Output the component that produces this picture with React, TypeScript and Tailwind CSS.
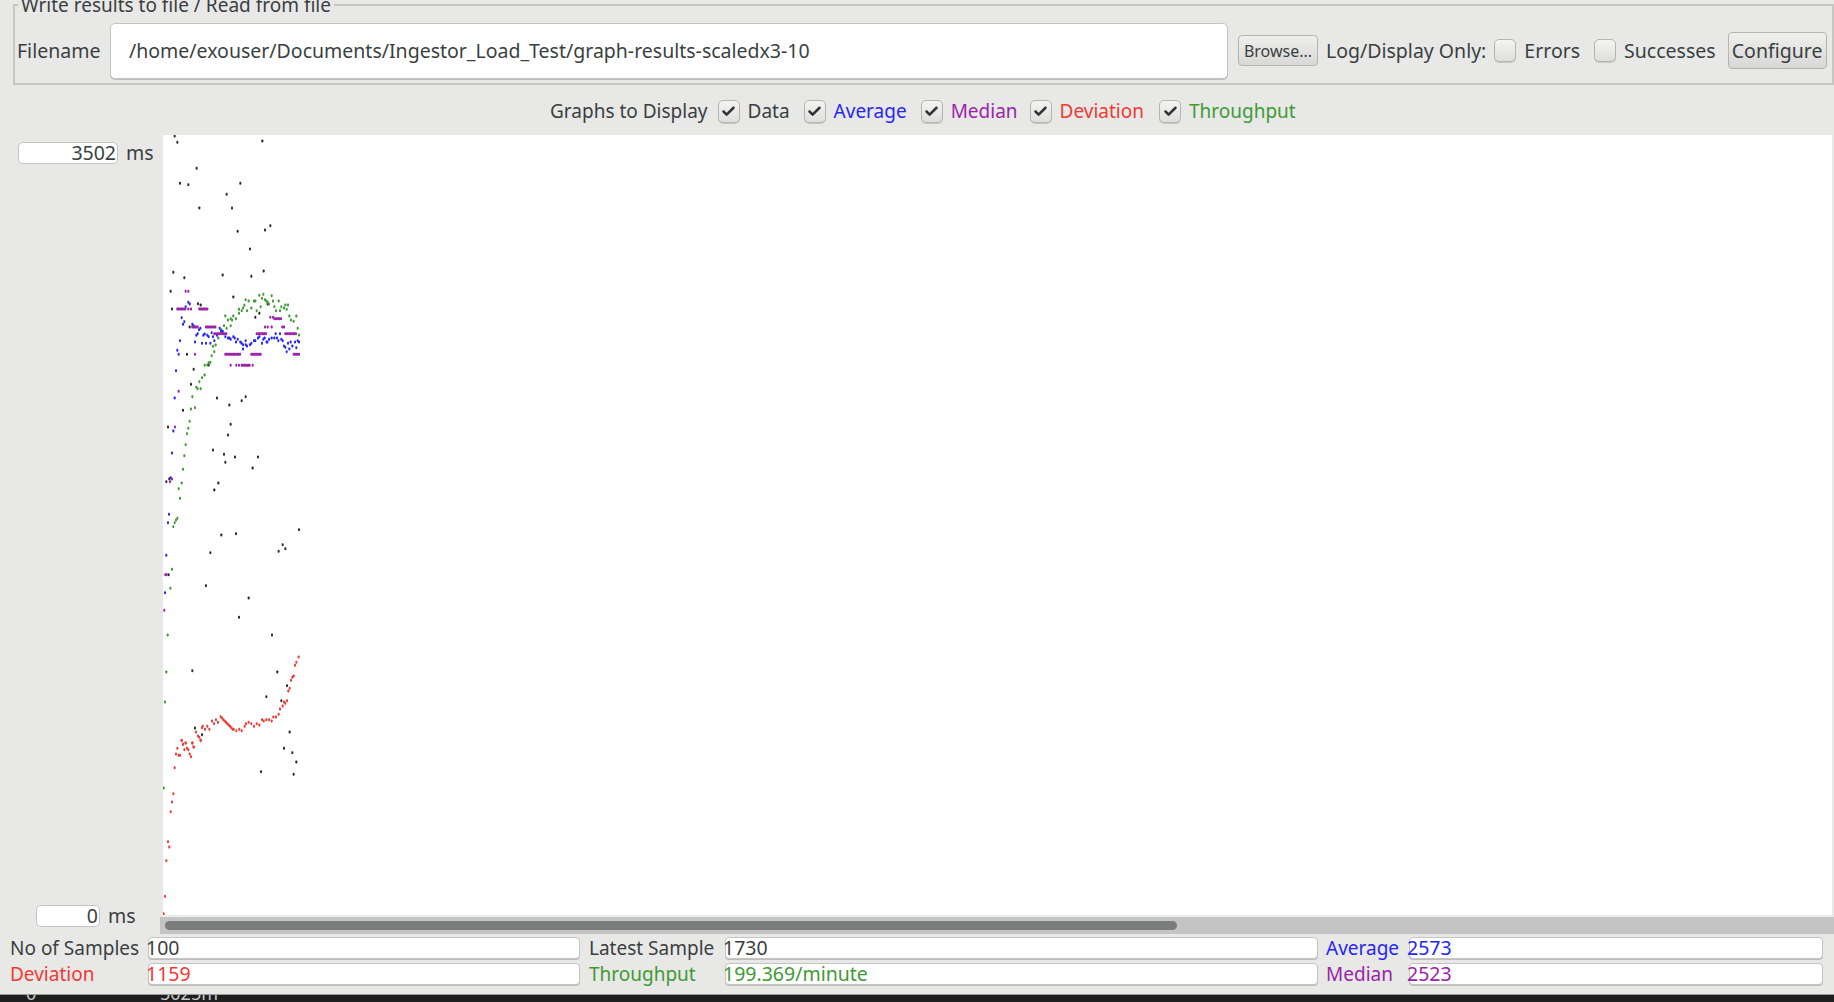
import React from 'react';
import { Check } from 'lucide-react';

type Pt = [number, number];

const FONT = "font-['Noto_Sans',sans-serif]";

// graph dots, kept as crop coordinates (3x) per y offset of the crop
const fromCrop = (yOffset: number, pts: Pt[]): Pt[] =>
  pts.map(([x, y]) => [150 + x / 3 - 163, yOffset + y / 3 - 135]);

const run = (x0: number, x1: number, y: number): Pt[] => {
  const out: Pt[] = [];
  for (let x = x0; x <= x1; x += 4) out.push([x, y]);
  return out;
};

const BLACK: Pt[] = [
  ...fromCrop(130, [[74, 18], [82, 37], [337, 33], [140, 115], [90, 160], [115, 164], [271, 160], [230, 193], [148, 234], [246, 234], [361, 287], [345, 300], [263, 304], [300, 357], [70, 427], [103, 443], [218, 435], [304, 439], [341, 423]]),
  ...fromCrop(280, [[62, 34], [250, 51], [144, 71], [152, 75], [66, 87], [353, 72], [328, 100], [316, 112], [119, 141], [176, 255], [131, 268], [123, 313], [111, 223], [201, 354], [238, 375], [275, 362], [287, 350]]),
  ...fromCrop(400, [[99, 31], [54, 81], [242, 73], [234, 105], [189, 150], [222, 163], [255, 171], [324, 171], [226, 187], [308, 204], [205, 249], [193, 270], [49, 245], [58, 237], [447, 389], [398, 434], [406, 446], [386, 454], [258, 401], [214, 405], [181, 458], [56, 524]]),
  ...fromCrop(570, [[168, 47], [296, 84], [267, 142], [366, 195], [127, 302], [382, 306], [411, 347], [349, 380], [394, 392], [135, 474], [156, 494], [419, 486]]),
  ...fromCrop(740, [[402, 25], [427, 38], [439, 66], [333, 95], [431, 103]]),
];

const BLUE: Pt[] = [
  ...fromCrop(280, [[115, 67], [119, 72], [107, 80], [95, 113], [103, 125], [99, 133], [127, 133], [131, 137], [151, 145], [147, 149], [143, 161], [139, 166], [160, 166], [164, 162], [172, 166], [176, 170], [90, 182], [135, 186], [156, 190], [168, 190], [181, 190], [193, 182], [189, 170], [185, 158], [201, 166], [209, 145], [213, 153], [218, 154], [226, 170], [234, 174], [242, 178], [238, 174], [250, 170], [254, 174], [258, 186], [263, 178], [271, 186], [275, 190], [279, 194], [279, 207], [287, 182], [287, 194], [291, 198], [300, 194], [304, 190], [312, 182], [316, 182], [324, 174], [328, 170], [336, 190], [340, 178], [344, 174], [350, 186], [352, 186], [357, 178], [365, 174], [373, 174], [381, 174], [385, 182], [377, 161], [390, 161], [394, 178], [398, 182], [402, 198], [406, 202], [410, 215], [414, 190], [422, 186], [418, 207], [427, 198], [435, 186], [439, 203], [443, 182], [447, 186], [82, 211], [86, 223], [78, 272], [74, 354]]),
  ...fromCrop(400, [[70, 93], [66, 159], [62, 233], [57, 343], [54, 368], [49, 466]]),
  ...fromCrop(570, [[45, 68]]),
];

const PURPLE: Pt[] = [
  ...fromCrop(280, [[107, 34], [115, 34], ...run(82, 107, 87), [115, 87], [123, 87], ...run(148, 172, 87), ...run(127, 143, 141), ...run(168, 197, 141), ...run(193, 230, 161), ...run(320, 348, 161), ...run(406, 439, 161), [345, 141], [353, 141], [365, 141], [361, 112], [369, 112], ...run(373, 394, 116), [397, 141], [402, 141], [135, 223], ...run(226, 271, 223), ...run(304, 332, 223), ...run(431, 447, 223), [242, 256], [259, 256], [267, 256], ...run(275, 300, 256), [308, 256], [86, 334]]),
  ...fromCrop(400, [[75, 81], [66, 237], [60, 245], [46, 524], [50, 524]]),
  ...fromCrop(570, [[43, 121]]),
];

const GREEN: Pt[] = [
  ...fromCrop(280, [[226, 108], [234, 120], [242, 116], [246, 120], [250, 108], [258, 116], [267, 100], [267, 88], [279, 84], [283, 76], [275, 92], [287, 59], [296, 63], [312, 63], [316, 63], [291, 92], [304, 84], [320, 92], [332, 80], [328, 46], [340, 43], [336, 55], [349, 63], [345, 59], [353, 67], [357, 72], [365, 47], [369, 63], [386, 63], [373, 80], [378, 92], [390, 92], [394, 80], [402, 84], [406, 75], [414, 75], [410, 88], [418, 108], [423, 120], [431, 124], [439, 108], [443, 145], [447, 165], [242, 137], [222, 137], [230, 145], [214, 149], [218, 157], [205, 174], [197, 195], [189, 199], [193, 215], [185, 227], [181, 247], [176, 248], [172, 255], [164, 256], [164, 285], [156, 293], [148, 305], [139, 322], [143, 326], [152, 326], [127, 350], [135, 383], [123, 387]]),
  ...fromCrop(400, [[119, 64], [115, 85], [111, 101], [107, 134], [103, 167], [99, 208], [95, 249], [86, 266], [90, 295], [82, 355], [78, 360], [74, 368], [70, 380], [66, 508]]),
  ...fromCrop(570, [[61, 55], [53, 195], [49, 306], [45, 396]]),
  ...fromCrop(740, [[41, 144]]),
];

const RED: Pt[] = [
  ...fromCrop(570, [[446, 261], [439, 277], [435, 286], [431, 318], [427, 322], [423, 331], [419, 355], [415, 363], [411, 392], [406, 400], [402, 396], [398, 408], [390, 417], [386, 433], [378, 441], [370, 441], [365, 453], [357, 449], [349, 449], [341, 453], [336, 449], [328, 465], [320, 461], [312, 469], [304, 461], [296, 457], [288, 461], [284, 469], [275, 482], [268, 478], [259, 482], [251, 478], [212, 440], [216, 444], [220, 449], [224, 453], [228, 457], [232, 461], [236, 465], [240, 469], [244, 473], [248, 478], [204, 457], [198, 449], [192, 461], [186, 453], [178, 478], [172, 469], [165, 478], [158, 469], [156, 473], [138, 486], [144, 498], [148, 502], [152, 510], [127, 519], [131, 531], [107, 519], [95, 511], [99, 523]]),
  ...fromCrop(740, [[152, 2], [127, 9], [131, 21], [107, 9], [95, 2], [99, 13], [82, 25], [103, 29], [111, 25], [115, 29], [78, 42], [86, 46], [90, 46], [119, 42], [123, 50], [74, 83], [70, 161], [66, 186], [62, 215], [54, 305], [58, 321], [49, 362], [45, 469], [41, 521]]),
];

const SERIES: { pts: Pt[]; fill: string }[] = [
  { pts: BLACK, fill: '#2a2a2a' },
  { pts: GREEN, fill: '#3f9a35' },
  { pts: BLUE, fill: '#2626f5' },
  { pts: PURPLE, fill: '#9a25a8' },
  { pts: RED, fill: '#f03a34' },
];

const Box: React.FC<{ checked?: boolean; className?: string }> = ({ checked, className = '' }) => (
  <span className={`flex items-center justify-center w-[22px] h-[23px] rounded-[5px] border border-[#b4b4b2] bg-gradient-to-b from-[#f4f4f3] to-[#dededc] shadow-[0_1px_0_#c8c8c6] ${className}`}>
    {checked && <Check className="w-[15px] h-[15px] text-[#2e3436]" strokeWidth={4} />}
  </span>
);

const GraphToggle: React.FC<{ label: string; color: string; className?: string }> = ({ label, color, className = '' }) => (
  <span className={`flex items-center gap-[8px] ${className}`}>
    <Box checked />
    <span className={color}>{label}</span>
  </span>
);

const Stat: React.FC<{ label: string; value: string; color: string; labelWidth: string }> = ({ label, value, color, labelWidth }) => (
  <div className={`flex items-center min-w-0 ${color}`}>
    <span className={`shrink-0 whitespace-nowrap text-[19px] ${labelWidth}`}>{label}</span>
    <div className="flex-1 h-[22px] flex items-center bg-white border border-[#c4c4c2] rounded-[4px] shadow-[0_1px_0_#bdbdbb] leading-none">
      <span className="-ml-[3px]">{value}</span>
    </div>
  </div>
);

export default function App() {
  return (
    <div className={`${FONT} w-[1834px] h-[1002px] overflow-hidden flex flex-col bg-[#e8e8e7] text-[#3a3f41] text-[19.5px] leading-none`}>
      {/* file panel */}
      <fieldset className="-mt-[8px] ml-[13px] mr-[2px] h-[93px] border-2 border-[#c6c6c4] pl-[2px] pr-[5px] flex">
        <legend className="ml-[1px] px-[3px] h-[26px] text-[19px] leading-[26px]">Write results to file / Read from file</legend>
        <div className="flex items-center w-full h-[79px] -mt-[7px]">
          <span className="w-[93px] shrink-0">Filename</span>
          <div className="w-[1118px] h-[56px] bg-white border border-[#c4c4c2] rounded-[5px] flex items-center pl-[18px] shadow-[0_1px_0_#bdbdbb]">
            /home/exouser/Documents/Ingestor_Load_Test/graph-results-scaledx3-10
          </div>
          <button className="ml-[10px] w-[80px] h-[31px] text-[16px] rounded-[4px] border border-[#b4b4b2] bg-gradient-to-b from-[#efefee] to-[#d8d8d6]">Browse...</button>
          <span className="ml-[8px] whitespace-nowrap">Log/Display Only:</span>
          <Box className="ml-[8px]" />
          <span className="ml-[8px]">Errors</span>
          <Box className="ml-[14px]" />
          <span className="ml-[8px]">Successes</span>
          <button className="ml-[12px] w-[99px] h-[37px] rounded-[4px] border border-[#b4b4b2] bg-gradient-to-b from-[#efefee] to-[#d8d8d6]">Configure</button>
        </div>
      </fieldset>

      {/* graph checkboxes */}
      <div className="h-[50px] shrink-0 flex items-center pl-[550px] pt-[2px] text-[19px]">
        <span className="whitespace-nowrap">Graphs to Display</span>
        <GraphToggle label="Data" color="text-[#3a3f41]" className="ml-[10px]" />
        <GraphToggle label="Average" color="text-[#2626f5]" className="ml-[14px]" />
        <GraphToggle label="Median" color="text-[#9a25a8]" className="ml-[14px]" />
        <GraphToggle label="Deviation" color="text-[#ef3a34]" className="ml-[12px]" />
        <GraphToggle label="Throughput" color="text-[#3f9a35]" className="ml-[15px]" />
      </div>

      {/* chart */}
      <div className="flex h-[782px] shrink-0">
        <div className="w-[163px] shrink-0 flex flex-col justify-between pt-[7px]">
          <div className="flex items-center pl-[18px] gap-[8px]">
            <div className="w-[100px] h-[22px] bg-white border border-[#c4c4c2] rounded-[5px] text-right pr-[1px] leading-[20px]">3502</div>
            <span>ms</span>
          </div>
          <div className="flex items-center pl-[36px] gap-[8px] mb-[-10px] relative z-10">
            <div className="w-[64px] h-[22px] bg-white border border-[#c4c4c2] rounded-[5px] text-right pr-[1px] leading-[20px]">0</div>
            <span>ms</span>
          </div>
        </div>
        <div className="flex-1 bg-white mr-[2px] border-b-2 border-[#ececeb]">
          <svg width="1669" height="780" className="block">
            {SERIES.map((s) =>
              s.pts.map(([x, y], i) => (
                <rect key={`${s.fill}-${i}`} x={x - 1} y={y - 1.5} width={2} height={3} rx={0.8} fill={s.fill} />
              )),
            )}
          </svg>
        </div>
      </div>

      {/* horizontal scrollbar */}
      <div className="ml-[160px] h-[17px] shrink-0 bg-[#c3c4c3] flex items-center pl-[5px]">
        <div className="w-[1012px] h-[9px] rounded-full bg-[#7b7d7d]" />
      </div>

      {/* stats */}
      <div className="h-[60px] shrink-0 grid grid-cols-[570px_738px_505px] grid-rows-[22px_22px] gap-y-[4px] pt-[3px] pl-[10px]">
        <Stat label="No of Samples" value="100" color="text-[#3a3f41]" labelWidth="w-[138px]" />
        <div className="pl-[9px]"><Stat label="Latest Sample" value="1730" color="text-[#3a3f41]" labelWidth="w-[136px]" /></div>
        <div className="pl-[8px]"><Stat label="Average" value="2573" color="text-[#2626f5]" labelWidth="w-[83px]" /></div>
        <Stat label="Deviation" value="1159" color="text-[#ef3a34]" labelWidth="w-[138px]" />
        <div className="pl-[9px]"><Stat label="Throughput" value="199.369/minute" color="text-[#3f9a35]" labelWidth="w-[136px]" /></div>
        <div className="pl-[8px]"><Stat label="Median" value="2523" color="text-[#9a25a8]" labelWidth="w-[83px]" /></div>
      </div>

      {/* window behind, clipped */}
      <div className="flex-1 bg-[#1e1e1e] border-t border-[#9a9a98] overflow-hidden relative text-[#c8c8c8] text-[18px]">
        <span className="absolute left-[26px] -top-[11px]">0</span>
        <span className="absolute left-[160px] -top-[11px]">5025m</span>
      </div>
    </div>
  );
}
